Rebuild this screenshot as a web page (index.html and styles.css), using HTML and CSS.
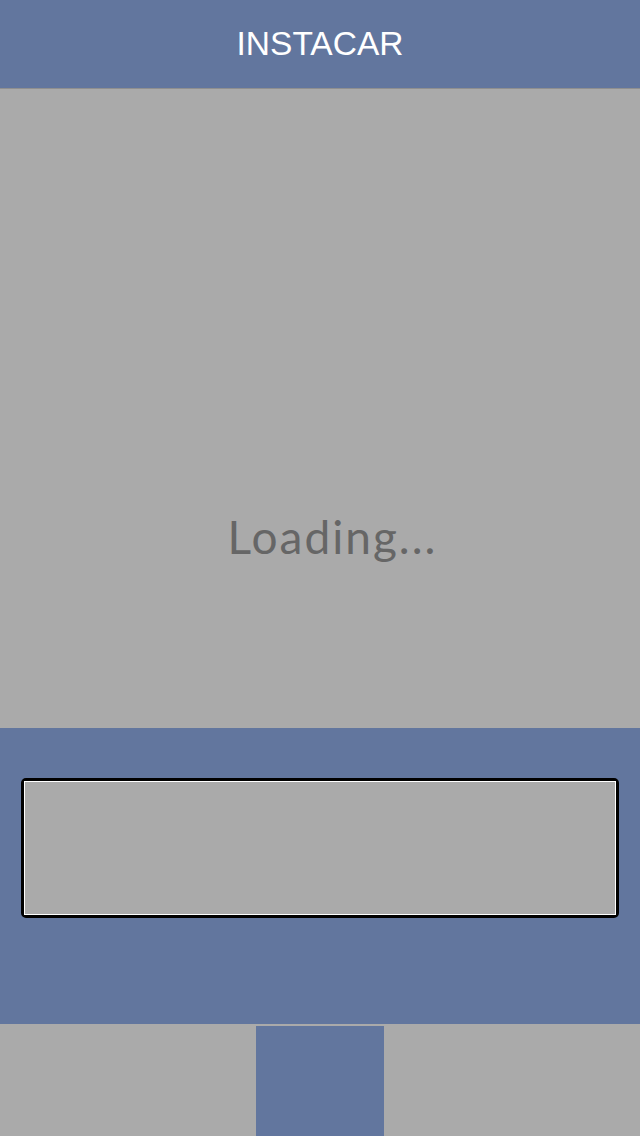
FILE: index.html
```html
<!DOCTYPE html>
<html>
<head>
<meta charset="utf-8">
<title>INSTACAR</title>
<link rel="stylesheet" href="styles.css">
</head>
<body>
<div class="app">
  <header class="topbar">INSTACAR</header>
  <main class="stage">
    <div class="loading">Loading...</div>
  </main>
  <section class="panel">
    <div class="field"><div class="field-inner"></div></div>
  </section>
  <nav class="tabs">
    <div class="tab"></div>
    <div class="tab tab-active"></div>
    <div class="tab"></div>
  </nav>
</div>
</body>
</html>
```
FILE: styles.css
```css
html, body {
  margin: 0;
  padding: 0;
  background: #aaaaaa;
}
.app {
  width: 640px;
  height: 1136px;
  display: flex;
  flex-direction: column;
  overflow: hidden;
}
.topbar {
  height: 88px;
  flex: 0 0 88px;
  background: #62769e;
  color: #ffffff;
  font-family: "Liberation Sans", Arial, sans-serif;
  font-size: 33.5px;
  line-height: 88px;
  text-align: center;
  border-bottom: 1px solid #8f8f8f;
}
.stage {
  flex: 0 0 639px;
  height: 639px;
  background: #aaaaaa;
  box-sizing: border-box;
  padding-top: 425px;
  display: flex;
  justify-content: center;
}
.loading {
  font-family: Lato, "Open Sans", sans-serif;
  font-size: 46px;
  line-height: 46px;
  height: 46px;
  color: #666666;
  letter-spacing: 2px;
  padding-left: 25px;
}
.panel {
  flex: 0 0 296px;
  height: 296px;
  background: #62769e;
  box-sizing: border-box;
  padding: 50px 21px 0 21px;
}
.field {
  height: 140px;
  box-sizing: border-box;
  border: 3px solid #000000;
  border-radius: 5px;
  background: #aaaaaa;
}
.field-inner {
  height: 100%;
  box-sizing: border-box;
  border: 1px solid #ffffff;
  background: #aaaaaa;
}
.tabs {
  flex: 0 0 112px;
  height: 112px;
  display: grid;
  grid-template-columns: 256px 128px 256px;
  background: #aaaaaa;
  padding-top: 2px;
  box-sizing: border-box;
}
.tab {
  background: #aaaaaa;
}
.tab-active {
  background: #62769e;
}
```
